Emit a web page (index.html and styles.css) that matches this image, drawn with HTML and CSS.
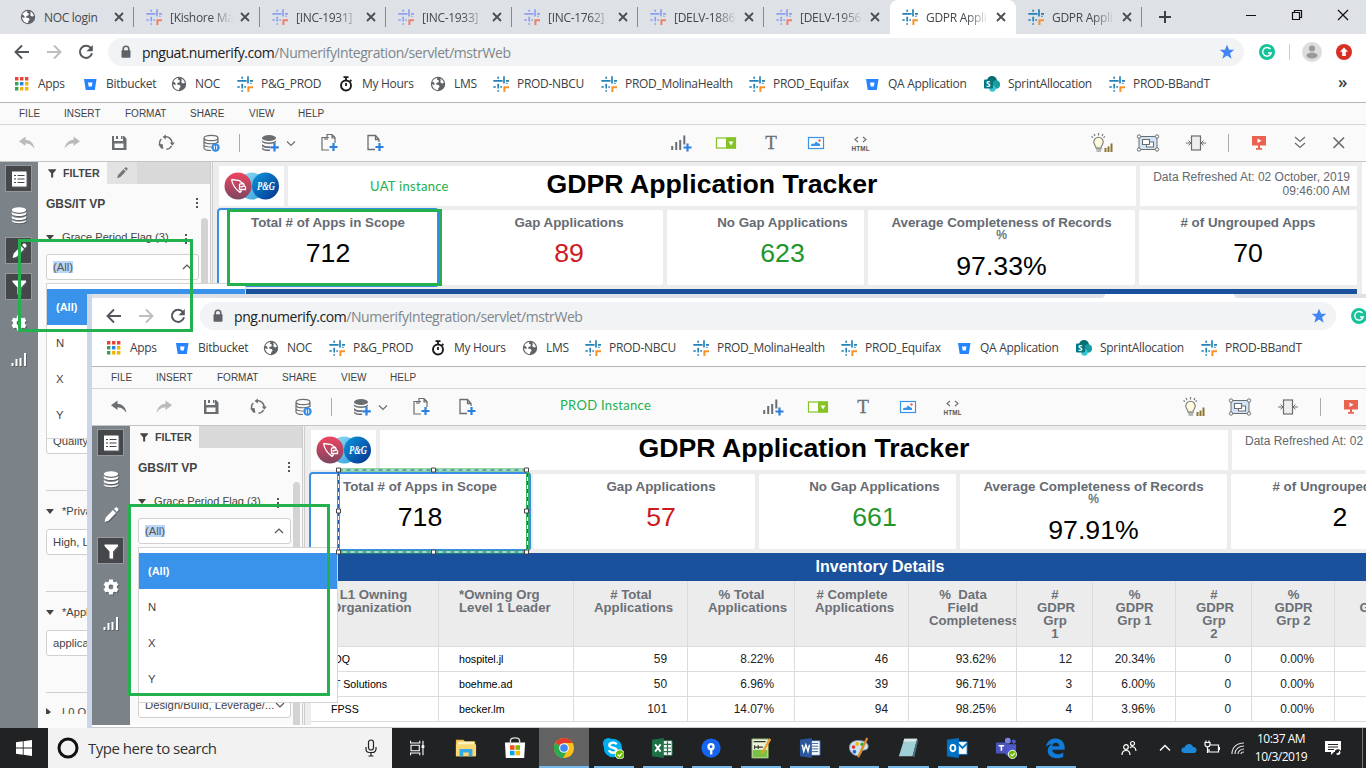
FILE: index.html
```html
<!DOCTYPE html>
<html lang="en">
<head>
<meta charset="utf-8">
<title>GDPR Application Tracker</title>
<link rel="stylesheet" href="styles.css">
</head>
<body>
<svg class="sprite" aria-hidden="true">
  <defs>
    <linearGradient id="g-red" x1="0" y1="0" x2="0" y2="1"><stop offset="0" stop-color="#ee4560"/><stop offset="1" stop-color="#7d4561"/></linearGradient>
    <linearGradient id="g-cyan" x1="0" y1="0" x2="1" y2="1"><stop offset="0" stop-color="#9adcf5"/><stop offset="1" stop-color="#2a9fdc"/></linearGradient>
    <linearGradient id="g-blue" x1="0" y1="0" x2="1" y2="1"><stop offset="0" stop-color="#0b9ae0"/><stop offset="1" stop-color="#052f8c"/></linearGradient>
  </defs>
  <symbol id="hash" viewBox="0 0 16 16"><path d="M.3 4.8H9.6M13 4.8H16M5.2.8V2.8M11 .2V7.6M.3 11H2.8M5.2 7.8V12.6M5.2 14.2V15.8M7.3 11H9M14 7.8V6.8" fill="none" stroke="var(--hash,#2482b8)" stroke-width="1.7"/><path d="M11.4 16V11.2H16" fill="none" stroke="var(--hook,#f7922d)" stroke-width="2"/></symbol>
  <symbol id="globe" viewBox="0 0 16 16"><circle cx="8" cy="8" r="7.2" fill="#5f6368"/><path d="M2.3 5.8C3 3.6 5 2.2 7.6 2l-.8 1.6 2 .9-.2 1.8-2.2.6-.4 1.6 2.7.6 1 1.7-1.3 1.3-.4 2c-3.4-.3-5.900-3-5.900-6.200l1.700 1 1.200-.6-1.600-2.300zM10.300 2.600c1.800.7 3.200 2.300 3.500 4.300l-1.800.5-1.900-1.300.7-1.500z" fill="#fff"/></symbol>
  <symbol id="bucket" viewBox="0 0 16 16"><path d="M2 3h12.500l-1.700 11H3.700z" fill="#2684ff"/><path d="M6 6.500h4.500l-.7 4H6.700z" fill="#fff"/></symbol>
  <symbol id="apps" viewBox="0 0 16 16"><path d="M1 1h3.400v3.400H1zM6 1h3.400v3.400H6zM11 1h3.400v3.400H11z" fill="#ea4335"/><path d="M1 6h3.400v3.400H1zM1 11h3.400v3.400H1z" fill="#34a05a"/><path d="M6 6h3.400v3.400H6z" fill="#2583e8"/><path d="M11 6h3.400v3.400H11zM6 11h3.400v3.400H6zM11 11h3.400v3.400H11z" fill="#f4b400"/></symbol>
  <symbol id="watch" viewBox="0 0 16 16"><circle cx="8" cy="9.500" r="5" fill="none" stroke="#1b1b1b" stroke-width="1.900"/><path d="M5.500 1.200h5M8 1v3M8 7v3M12 4l1.400 1.400" stroke="#1b1b1b" stroke-width="1.800"/></symbol>
  <symbol id="sp" viewBox="0 0 16 16"><circle cx="8" cy="5" r="5" fill="#036c70"/><circle cx="12" cy="8.500" r="4.200" fill="#1a9ba1"/><circle cx="8.500" cy="12.500" r="3.200" fill="#37c6d0"/><rect y="3.500" width="9" height="9" rx="1" fill="#03787c"/><text x="2" y="11" font-size="8" font-weight="700" font-family="Open Sans, sans-serif" fill="#fff">S</text></symbol>
  <symbol id="x" viewBox="0 0 16 16"><path d="M4 4l8 8M12 4l-8 8" stroke="#4a4d51" stroke-width="1.800"/></symbol>
  <symbol id="back" viewBox="0 0 16 16"><path d="M15 8H2M8 1.500L1.500 8 8 14.500" fill="none" stroke="currentColor" stroke-width="1.900"/></symbol>
  <symbol id="fwd" viewBox="0 0 16 16"><path d="M1 8H14M8 1.500L14.500 8 8 14.500" fill="none" stroke="currentColor" stroke-width="1.900"/></symbol>
  <symbol id="reload" viewBox="0 0 16 16"><path d="M13 4.200A6.100 6.100 0 1 0 14 9.300" fill="none" stroke="#54585d" stroke-width="2"/><path d="M14.800 1v6.300H8.500z" fill="#54585d"/></symbol>
  <symbol id="lock" viewBox="0 0 12 14"><path d="M3.200 6V4a2.800 2.800 0 0 1 5.600 0v2" fill="none" stroke="#5f6368" stroke-width="1.600"/><rect x="1.500" y="5.200" width="9" height="7.500" rx="1" fill="#5f6368"/></symbol>
  <symbol id="star" viewBox="0 0 16 16"><path d="M8 .8l2.100 5h5.200l-4.200 3.400 1.500 5.500L8 11.500l-4.600 3.200 1.500-5.500L.7 5.800h5.200z" fill="#4285f4"/></symbol>
  <symbol id="gram" viewBox="0 0 16 16"><circle cx="8" cy="8" r="8" fill="#15c39a"/><path d="M11.500 5.200A4.300 4.300 0 1 0 12.200 9H9" fill="none" stroke="#fff" stroke-width="1.400"/></symbol>
  <symbol id="undo" viewBox="0 0 24 24"><path d="M4 10.200l6.500-4.700v3.300c5 .5 8 3.500 9 9-3-4-5-5.300-9-5.600v2.800z" fill="currentColor"/></symbol>
  <symbol id="redo" viewBox="0 0 24 24"><path d="M20 10.200l-6.500-4.700v3.300c-5 .5-8 3.500-9 9 3-4 5-5.300 9-5.600v2.800z" fill="currentColor"/></symbol>
  <symbol id="save" viewBox="0 0 24 24"><path d="M5 5h2v5h9V5h1l2.500 2.500V19H5zM7.500 12.500v4.500h9v-4.500z" fill="#6b6e70" fill-rule="evenodd"/><path d="M9 5h2v3H9zM14 5h1.500v3H14z" fill="#6b6e70"/></symbol>
  <symbol id="sync" viewBox="0 0 24 24"><path d="M18.200 12.500A6.300 6.300 0 0 0 10.500 6M7.200 7.900a6.300 6.300 0 0 0 1.300 9.600M12.500 18.300a6.300 6.300 0 0 0 5-3.300" fill="none" stroke="#6b6e70" stroke-width="1.500"/><path d="M15.800 11.500h5l-2.500 3.200zM11.800 3.500v5L8.600 6zM4 13.500l4.500-.5 1 5z" fill="#6b6e70"/></symbol>
  <symbol id="dbp" viewBox="0 0 24 24"><path d="M5 7c0-3.500 14-3.500 14 0s-14 3.500-14 0v10c0 1.500 3 2.500 7 2.500M19 7v5M5 10.500c1 3 13 3 14 0M5 14c1 1.500 3 2 7 2" fill="none" stroke="#6b6e70" stroke-width="1.200"/><circle cx="16.500" cy="16.500" r="4.200" fill="#2f8be6"/><path d="M15.300 14.500v4M17.700 14.500v4" stroke="#fff" stroke-width="1"/></symbol>
  <symbol id="dbadd" viewBox="0 0 24 24"><ellipse cx="11" cy="7" rx="7" ry="3" fill="#6b6e70"/><path d="M4 9.500c2 2.500 12 2.500 14 0v1.500c-2 2.500-12 2.500-14 0zM4 13c2 2.300 5 2.500 8 2.200v1.800C8 17.300 5 16.700 4 15zM4 16.500c2 2 5 2.300 8 2V20c-4 .2-7-.5-8-2z" fill="#6b6e70"/><path d="M16.500 12v8.500M12.300 16.300h8.500" stroke="#2c7fdd" stroke-width="2.200"/></symbol>
  <symbol id="chev" viewBox="0 0 12 24"><path d="M2 10.500l4 4 4-4" fill="none" stroke="#6b6e70" stroke-width="1.200"/></symbol>
  <symbol id="pages" viewBox="0 0 24 24"><path d="M8 6.500H5v12.500h7M10 9V3.500h5l3 3V12M15 3.500v3.500h3M8 9V6.500h4" fill="none" stroke="#6b6e70" stroke-width="1.200"/><path d="M16.500 12v8M12.500 16h8" stroke="#2c7fdd" stroke-width="2.200"/></symbol>
  <symbol id="page" viewBox="0 0 24 24"><path d="M12 18.500H5V4.500h7.500l3.500 4V11M12.500 4.500v4H16" fill="none" stroke="#6b6e70" stroke-width="1.300"/><path d="M16.500 12v8M12.500 16h8" stroke="#2c7fdd" stroke-width="2.200"/></symbol>
  <symbol id="vis" viewBox="0 0 24 24"><path d="M3.200 15v4M7.200 11v8M11.200 9v10M15.300 4.500v9" stroke="#6b6e70" stroke-width="2"/><path d="M18.500 12.500v8M14.500 16.500h8" stroke="#2c7fdd" stroke-width="2.200"/></symbol>
  <symbol id="sel" viewBox="0 0 24 24"><rect x="2.500" y="7" width="19" height="10" fill="#fff" stroke="#84c225" stroke-width="1.200"/><rect x="12" y="6.500" width="10" height="11" fill="#84c225"/><path d="M14.500 10.500h5l-2.500 4z" fill="#fff"/></symbol>
  <symbol id="pic" viewBox="0 0 24 24"><rect x="4.500" y="6.500" width="15" height="11" fill="#fff" stroke="#3a93eb" stroke-width="1.200"/><path d="M7 15v-1.500l2-1 1 .5 2-2.500 2 1.500 2 1V15z" fill="#3a93eb"/><circle cx="15.500" cy="9.500" r="1.200" fill="#e8604c"/></symbol>
  <symbol id="code" viewBox="0 0 24 24"><path d="M10 6L7 8.500 10 11M15 6l3 2.500L15 11" fill="none" stroke="#6b6e70" stroke-width="1.100"/><text x="3.500" y="20" font-size="6.300" textLength="18" font-weight="700" font-family="Liberation Sans, sans-serif" fill="#55585a">HTML</text></symbol>
  <symbol id="bulb" viewBox="0 0 24 24"><path d="M7 17c0-2.500-2.200-3-2.200-6a4.700 4.700 0 0 1 9.400 0c0 3-2.200 3.500-2.200 6z" fill="#fdfbdc" stroke="#777" stroke-width="1.100"/><path d="M7 18h5.500M7.500 20h4.500M9.500 2v2.500M5 3l1 2M14 3l-1 2M2.500 5.500L4 6.500M16 5.500l-1.500 1" stroke="#777" stroke-width="1.200"/><path d="M16.500 17v4M19.500 15.500V21M22.500 12.500V21" stroke="#8b7732" stroke-width="2"/></symbol>
  <symbol id="group" viewBox="0 0 24 24"><rect x="3" y="5.500" width="18" height="13" fill="#d3e4f8" stroke="#6b6e70"/><path d="M6.500 8.500h7v5h-7z" fill="#fff" stroke="#6b6e70" stroke-width="1.100"/><path d="M13.500 11h4v5h-7v-2.500h3z" fill="#fff" stroke="#6b6e70" stroke-width="1.100"/><g fill="#fff" stroke="#6b6e70"><circle cx="3" cy="5.500" r="1.700"/><circle cx="21" cy="5.500" r="1.700"/><circle cx="3" cy="18.500" r="1.700"/><circle cx="21" cy="18.500" r="1.700"/></g></symbol>
  <symbol id="fit" viewBox="0 0 24 24"><rect x="7.500" y="5" width="9" height="14" fill="#eee" stroke="#6b6e70" stroke-width="1.200"/><path d="M2 12h4.500M4.500 9.500L7 12l-2.500 2.500M22 12h-4.500M19.500 9.500L17 12l2.500 2.500" fill="none" stroke="#6b6e70"/></symbol>
  <symbol id="show" viewBox="0 0 24 24"><path d="M5 5h14v9.500H5zM11 14h2v4h-2zM9 17h6v1.700H9z" fill="#ea6350"/><path d="M10.500 7.500l4 2.300-4 2.300z" fill="#fff"/></symbol>
  <symbol id="down2" viewBox="0 0 24 24"><path d="M7 6l5 4.500L17 6M7 12l5 4.500 5-4.500" fill="none" stroke="#6b6e70" stroke-width="1.300"/></symbol>
  <symbol id="close" viewBox="0 0 24 24"><path d="M6.500 6.500l10.500 10.500M17 6.500L6.500 17" stroke="#6b6e70" stroke-width="1.700"/></symbol>
  <symbol id="list" viewBox="0 0 24 24"><rect x="5" y="4.500" width="14.500" height="15" fill="#fff"/><path d="M7 8.500h2M7 12h2M7 15.500h2M10.500 8.500h7M10.500 12h7M10.500 15.500h7" stroke="#47474b" stroke-width="1.200"/></symbol>
  <symbol id="db" viewBox="0 0 24 24"><ellipse cx="12" cy="7" rx="7.200" ry="2.800" fill="#fff"/><path d="M4.800 9c2 2.500 12.400 2.500 14.400 0v2c-2 2.800-12.400 2.800-14.400 0zM4.800 13c2 2.500 12.400 2.500 14.400 0v2c-2 2.800-12.400 2.800-14.400 0zM4.800 17c2 2.300 12.400 2.300 14.400 0v1c-2 3-12.400 3-14.400 0z" fill="#fff"/></symbol>
  <symbol id="pen" viewBox="0 0 24 24"><path d="M5.500 19l1.200-4.500L14 7l3 3-7.500 7.700zM15 6l1.500-1.500c1-1 4 1.500 2.700 2.900L17.900 9z" fill="currentColor"/></symbol>
  <symbol id="funnel" viewBox="0 0 24 24"><path d="M5.500 5.500h13.500v1.500l-5 5.500v7h-3.500v-7l-5-5.500z" fill="currentColor"/></symbol>
  <symbol id="gear" viewBox="0 0 24 24"><circle cx="12" cy="12" r="4.200" fill="none" stroke="#fff" stroke-width="3.600"/><path d="M12 4.500V7M12 17v2.500M5.500 8.200l2.200 1.300M16.300 14.500l2.200 1.300M5.500 15.800l2.200-1.300M16.300 9.500l2.200-1.300" stroke="#fff" stroke-width="4"/></symbol>
  <symbol id="bars" viewBox="0 0 24 24"><path d="M5.500 16v3M9.500 12v7M13.500 11v8M18 6v13" stroke="#fff" stroke-width="2"/></symbol>
  <symbol id="logo" viewBox="0 0 56 28"><circle cx="28" cy="14" r="13.500" fill="url(#g-cyan)"/><circle cx="14" cy="14" r="13.500" fill="url(#g-red)"/><circle cx="41.500" cy="14" r="13.500" fill="url(#g-blue)"/><path d="M7.500 7.500c1 5.500 3 9 8.500 13M7.500 7.500l8 1.200 3.500 3M16 20.500l1.500-2M15.500 12l4-.5 1 2.500-4 1M15.500 12v5.500h6v-3M15.500 17.500h6" fill="none" stroke="#fff" stroke-width="1.300"/><text x="33" y="18" font-size="11.500" textLength="18" lengthAdjust="spacingAndGlyphs" font-style="italic" font-weight="700" font-family="Liberation Serif, serif" fill="#fff">P&amp;G</text></symbol>
</svg>

<div class="desktop">
  <div class="window uat">
    <div class="tabs">
      <div class="tab"><svg><use href="#globe"/></svg><span>NOC login</span><svg><use href="#x"/></svg></div>
      <div class="tab pale"><svg><use href="#hash"/></svg><span>[Kishore Ma</span><svg><use href="#x"/></svg></div>
      <div class="tab pale"><svg><use href="#hash"/></svg><span>[INC-1931]</span><svg><use href="#x"/></svg></div>
      <div class="tab pale"><svg><use href="#hash"/></svg><span>[INC-1933]</span><svg><use href="#x"/></svg></div>
      <div class="tab pale"><svg><use href="#hash"/></svg><span>[INC-1762]</span><svg><use href="#x"/></svg></div>
      <div class="tab pale"><svg><use href="#hash"/></svg><span>[DELV-1886</span><svg><use href="#x"/></svg></div>
      <div class="tab pale last"><svg><use href="#hash"/></svg><span>[DELV-1956</span><svg><use href="#x"/></svg></div>
      <div class="tab active"><svg><use href="#hash"/></svg><span>GDPR Appli</span><svg><use href="#x"/></svg></div>
      <div class="tab"><svg><use href="#hash"/></svg><span>GDPR Appli</span><svg><use href="#x"/></svg></div>
      <svg class="plus" viewBox="0 0 16 16"><path d="M8 2v12M2 8h12" stroke="#3c4043" stroke-width="2"/></svg>
      <svg class="winbtns" viewBox="0 0 104 20"><path d="M1 10.500h10M93 5l10 10M103 5l-10 10" stroke="#111" stroke-width="1.200"/><path d="M47.500 7.500h7v7h-7zM49.500 7V5.500h7v7H55" fill="none" stroke="#111" stroke-width="1.200"/></svg>
    </div>
    <div class="address">
      <svg><use href="#back"/></svg><svg class="dim"><use href="#fwd"/></svg><svg><use href="#reload"/></svg>
      <div class="omni"><svg class="lock"><use href="#lock"/></svg><span class="url"><b>pnguat.numerify.com</b>/NumerifyIntegration/servlet/mstrWeb</span><svg class="star"><use href="#star"/></svg></div>
      <svg class="gram"><use href="#gram"/></svg><i class="vline"></i>
      <svg class="user" viewBox="0 0 20 20"><circle cx="10" cy="10" r="10" fill="#dcdcdc"/><circle cx="10" cy="6.500" r="3" fill="#999"/><ellipse cx="10" cy="13.500" rx="5.500" ry="3" fill="#999"/></svg>
      <svg class="update" viewBox="0 0 16 16"><circle cx="8" cy="8" r="8" fill="#d93025"/><path d="M8 3.500l4 4.300H9.800V12H6.200V7.800H4z" fill="#fff"/></svg>
    </div>
    <div class="bookmarks">
      <span><svg><use href="#apps"/></svg>Apps</span><span><svg><use href="#bucket"/></svg>Bitbucket</span><span><svg><use href="#globe"/></svg>NOC</span><span><svg><use href="#hash"/></svg>P&amp;G_PROD</span><span><svg><use href="#watch"/></svg>My Hours</span><span><svg><use href="#globe"/></svg>LMS</span><span><svg><use href="#hash"/></svg>PROD-NBCU</span><span><svg><use href="#hash"/></svg>PROD_MolinaHealth</span><span><svg><use href="#hash"/></svg>PROD_Equifax</span><span><svg><use href="#bucket"/></svg>QA Application</span><span><svg><use href="#sp"/></svg>SprintAllocation</span><span><svg><use href="#hash"/></svg>PROD-BBandT</span><span class="more">»</span>
    </div>
    <div class="menu"><span>FILE</span><span>INSERT</span><span>FORMAT</span><span>SHARE</span><span>VIEW</span><span>HELP</span></div>
    <div class="toolbar">
      <svg class="dim"><use href="#undo"/></svg><svg class="dim"><use href="#redo"/></svg><svg><use href="#save"/></svg><svg><use href="#sync"/></svg><svg><use href="#dbp"/></svg><i></i><svg><use href="#dbadd"/></svg><svg class="narrow"><use href="#chev"/></svg><svg><use href="#pages"/></svg><svg><use href="#page"/></svg><svg><use href="#vis"/></svg><svg><use href="#sel"/></svg><span class="tee">T</span><svg><use href="#pic"/></svg><svg><use href="#code"/></svg><svg><use href="#bulb"/></svg><svg><use href="#group"/></svg><svg><use href="#fit"/></svg><i></i><svg><use href="#show"/></svg><svg><use href="#down2"/></svg><svg><use href="#close"/></svg>
    </div>
    <div class="body">
      <div class="rail"><b class="on"><svg><use href="#list"/></svg></b><b><svg><use href="#db"/></svg></b><b class="on"><svg><use href="#pen"/></svg></b><b class="on"><svg><use href="#funnel"/></svg></b><b><svg><use href="#gear"/></svg></b><b><svg><use href="#bars"/></svg></b></div>
      <div class="panel">
        <div class="ptabs"><span><svg><use href="#funnel"/></svg>FILTER</span><em><svg><use href="#pen"/></svg></em></div>
        <div class="ptitle">GBS/IT VP<i class="kebab"></i></div>
        <div class="scroll">
          <div class="flabel"><i class="tri"></i>Grace Period Flag (3)<i class="kebab"></i></div>
          <div class="select"><mark>(All)</mark><svg viewBox="0 0 12 12"><path d="M2 8l4-4 4 4" fill="none" stroke="#555" stroke-width="1.200"/></svg></div>
          <div class="select quality">Quality.</div>
          <hr>
          <div class="flabel"><i class="tri"></i>*Priva</div>
          <div class="select">High, L</div>
          <hr>
          <div class="flabel"><i class="tri"></i>*Appl</div>
          <div class="select">applica</div>
          <hr>
          <div class="flabel cut"><i class="tri side"></i>L0 O</div>
          <i class="thumb"></i>
        </div>
        <div class="dropdown"><span>(All)</span><span>N</span><span>X</span><span>Y</span></div>
      </div>
      <div class="split"></div>
      <div class="main">
        <div class="head"><div class="brand"><svg><use href="#logo"/></svg></div><h1>GDPR Application Tracker</h1><p>Data Refreshed At: 02 October, 2019 09:46:00 AM</p></div>
        <div class="cards">
          <div class="card picked"><h2>Total # of Apps in Scope</h2><strong>712</strong></div>
          <div class="card shift red"><h2>Gap Applications</h2><strong>89</strong></div>
          <div class="card shift green"><h2>No Gap Applications</h2><strong>623</strong></div>
          <div class="card"><h2>Average Completeness of Records<small>%</small></h2><strong>97.33%</strong></div>
          <div class="card"><h2># of Ungrouped Apps</h2><strong>70</strong></div>
        </div>
        <div class="bar"></div>
      </div>
      <div class="gutter"></div>
    </div>
  </div>

  <div class="frame">
    <div class="window prod">
      <div class="tabedge"><i></i><i></i></div>
      <div class="address">
        <svg><use href="#back"/></svg><svg class="dim"><use href="#fwd"/></svg><svg><use href="#reload"/></svg>
        <div class="omni"><svg class="lock"><use href="#lock"/></svg><span class="url"><b>png.numerify.com</b>/NumerifyIntegration/servlet/mstrWeb</span><svg class="star"><use href="#star"/></svg></div>
        <svg class="gram"><use href="#gram"/></svg>
      </div>
      <div class="bookmarks">
        <span><svg><use href="#apps"/></svg>Apps</span><span><svg><use href="#bucket"/></svg>Bitbucket</span><span><svg><use href="#globe"/></svg>NOC</span><span><svg><use href="#hash"/></svg>P&amp;G_PROD</span><span><svg><use href="#watch"/></svg>My Hours</span><span><svg><use href="#globe"/></svg>LMS</span><span><svg><use href="#hash"/></svg>PROD-NBCU</span><span><svg><use href="#hash"/></svg>PROD_MolinaHealth</span><span><svg><use href="#hash"/></svg>PROD_Equifax</span><span><svg><use href="#bucket"/></svg>QA Application</span><span><svg><use href="#sp"/></svg>SprintAllocation</span><span><svg><use href="#hash"/></svg>PROD-BBandT</span>
      </div>
      <div class="menu"><span>FILE</span><span>INSERT</span><span>FORMAT</span><span>SHARE</span><span>VIEW</span><span>HELP</span></div>
      <div class="toolbar">
        <svg><use href="#undo"/></svg><svg class="dim"><use href="#redo"/></svg><svg><use href="#save"/></svg><svg><use href="#sync"/></svg><svg><use href="#dbp"/></svg><i></i><svg><use href="#dbadd"/></svg><svg class="narrow"><use href="#chev"/></svg><svg><use href="#pages"/></svg><svg><use href="#page"/></svg><svg><use href="#vis"/></svg><svg><use href="#sel"/></svg><span class="tee">T</span><svg><use href="#pic"/></svg><svg><use href="#code"/></svg><svg><use href="#bulb"/></svg><svg><use href="#group"/></svg><svg><use href="#fit"/></svg><i></i><svg><use href="#show"/></svg>
      </div>
      <div class="body">
        <div class="rail"><b class="on"><svg><use href="#list"/></svg></b><b><svg><use href="#db"/></svg></b><b><svg><use href="#pen"/></svg></b><b class="on"><svg><use href="#funnel"/></svg></b><b><svg><use href="#gear"/></svg></b><b><svg><use href="#bars"/></svg></b></div>
        <div class="panel">
          <div class="ptabs"><span><svg><use href="#funnel"/></svg>FILTER</span></div>
          <div class="ptitle">GBS/IT VP<i class="kebab"></i></div>
          <div class="scroll">
            <div class="flabel"><i class="tri"></i>Grace Period Flag (3)<i class="kebab"></i></div>
            <div class="select"><mark>(All)</mark><svg viewBox="0 0 12 12"><path d="M2 8l4-4 4 4" fill="none" stroke="#555" stroke-width="1.200"/></svg></div>
            <div class="select quality">Design/Build, Leverage/...<svg viewBox="0 0 12 12"><path d="M2 4l4 4 4-4" fill="none" stroke="#555" stroke-width="1.200"/></svg></div>
            <i class="thumb"></i>
          </div>
          <div class="dropdown"><span>(All)</span><span>N</span><span>X</span><span>Y</span></div>
        </div>
        <div class="split"></div>
        <div class="main">
          <div class="head"><div class="brand"><svg><use href="#logo"/></svg></div><h1>GDPR Application Tracker</h1><p>Data Refreshed At: 02</p></div>
          <div class="cards">
            <div class="card picked"><h2>Total # of Apps in Scope</h2><strong>718</strong></div>
            <div class="card shift red"><h2>Gap Applications</h2><strong>57</strong></div>
            <div class="card shift green"><h2>No Gap Applications</h2><strong>661</strong></div>
            <div class="card"><h2>Average Completeness of Records<small>%</small></h2><strong>97.91%</strong></div>
            <div class="card"><h2># of Ungrouped Apps</h2><strong>2</strong></div>
          </div>
          <div class="bar">Inventory Details</div>
          <div class="table">
            <div class="row th"><span>*&nbsp;L1 Owning Organization</span><span>*Owning Org Level 1 Leader</span><span># Total Applications</span><span>% Total Applications</span><span># Complete Applications</span><span>%&nbsp; Data<br>Field Completeness</span><span>#<br>GDPR Grp<br>1</span><span>%<br>GDPR Grp 1</span><span>#<br>GDPR Grp<br>2</span><span>%<br>GDPR Grp 2</span><span>#<br>GDPR Grp 3</span></div>
            <div class="row"><span>IDQ</span><span>hospitel.jl</span><span>59</span><span>8.22%</span><span>46</span><span>93.62%</span><span>12</span><span>20.34%</span><span>0</span><span>0.00%</span><span></span></div>
            <div class="row"><span>IT Solutions</span><span>boehme.ad</span><span>50</span><span>6.96%</span><span>39</span><span>96.71%</span><span>3</span><span>6.00%</span><span>0</span><span>0.00%</span><span></span></div>
            <div class="row"><span>FPSS</span><span>becker.lm</span><span>101</span><span>14.07%</span><span>94</span><span>98.25%</span><span>4</span><span>3.96%</span><span>0</span><span>0.00%</span><span></span></div>
            <div class="row"></div>
          </div>
        </div>
      </div>
      <div class="foot"></div>
    </div>
  </div>

  <div class="box uat-filter"></div>
  <div class="box uat-total"></div>
  <div class="box prod-filter"></div>
  <svg class="picker" viewBox="0 0 194 88"><rect x="3.500" y="3" width="189" height="82" fill="none" stroke="#22b14c" stroke-width="3"/><rect x="3.500" y="3" width="189" height="82" fill="none" stroke="#fff" stroke-width="1.200"/><rect x="3.500" y="3" width="189" height="82" fill="none" stroke="#1f5fae" stroke-width="1.200" stroke-dasharray="4 4"/><path d="M1.500 1h4v4h-4zM96.500 1h4v4h-4zM189.500 1h4v4h-4zM1.500 42h4v4h-4zM189.500 42h4v4h-4zM1.500 83h4v4h-4zM96.500 83h4v4h-4zM189.500 83h4v4h-4z" fill="#fff" stroke="#444"/></svg>
  <div class="note n1">UAT instance</div>
  <div class="note n2">PROD Instance</div>

  <div class="taskbar">
    <div class="start"><svg viewBox="0 0 16 16"><path d="M0 2.300L6.800 1.300v6.300H0zM7.600 1.200L16 0v7.600H7.600zM0 8.400h6.800v6.300L0 13.700zM7.600 8.400H16V16l-8.400-1.200z" fill="#fff"/></svg></div>
    <div class="search"><svg viewBox="0 0 22 22"><circle cx="11" cy="11" r="9" fill="none" stroke="#111" stroke-width="3"/></svg><span>Type here to search</span><svg class="mic" viewBox="0 0 14 18"><rect x="4.500" y="1" width="5" height="10" rx="2.500" fill="none" stroke="#222" stroke-width="1.200"/><path d="M2 8v2a3.500 3.500 0 0 0 3.500 3.500h3A3.500 3.500 0 0 0 12 10V8M7 13.500V17M4.500 17h5" fill="none" stroke="#222" stroke-width="1.200"/></svg></div>
    <div class="apps">
      <b><svg viewBox="0 0 24 24"><path d="M5 4v2.500h10V4M5 20v-2.500h10V20M5.500 9h9v6h-9zM18.500 4v16" fill="none" stroke="#fff" stroke-width="1.200"/><path d="M17 9h3v3h-3z" fill="#fff"/></svg></b>
      <b><svg viewBox="0 0 24 24"><path d="M1 3h8l2 2h11v16H1z" fill="#f5c04a"/><path d="M3 5h18v5H3z" fill="#fff3bd"/><path d="M1 8h22v13H1z" fill="#fbd873"/><path d="M5 21v-8h14v8h-4v-4H9v4z" fill="#35a9e6"/></svg></b>
      <b><svg viewBox="0 0 24 24"><path d="M1 6h22l-1 17H2z" fill="#fff"/><path d="M7 8V4c0-4 10-4 10 0v4" fill="none" stroke="#ddd" stroke-width="1.500"/><path d="M6.500 9h5v5h-5z" fill="#f25022"/><path d="M12.500 9h5v5h-5z" fill="#7fba00"/><path d="M6.500 15h5v5h-5z" fill="#00a4ef"/><path d="M12.500 15h5v5h-5z" fill="#ffb900"/></svg></b>
      <b class="live hot"><svg viewBox="0 0 24 24"><circle cx="12" cy="12" r="11" fill="#fbc116"/><path d="M12 12L2.500 6.500A11 11 0 0 1 21.500 6.500H12z" fill="#e33b2e"/><path d="M12 12L2.500 6.500A11 11 0 0 0 11 23l4.800-8.800z" fill="#2da94f"/><circle cx="12" cy="12" r="5.300" fill="#fff"/><circle cx="12" cy="12" r="4.200" fill="#4285f4"/></svg></b>
      <b class="live"><svg viewBox="0 0 24 24"><circle cx="7" cy="7" r="6" fill="#00aff0"/><circle cx="16" cy="16" r="6" fill="#00aff0"/><circle cx="12" cy="12" r="10" fill="#00aff0"/><path d="M16 8c-2-3-8-2-8 1 0 3.500 8 2 8 5.500 0 3-6.500 4-8.500 0" fill="none" stroke="#fff" stroke-width="2.600"/><circle cx="19.500" cy="19" r="5" fill="#6bb700" stroke="#fff"/><path d="M17 19l2 2 3-3.500" fill="none" stroke="#fff" stroke-width="1.300"/></svg></b>
      <b class="live"><svg viewBox="0 0 24 24"><path d="M12 4h11v16H12z" fill="#fff" stroke="#217346"/><path d="M14 8h8M14 12h8M14 16h8M18 5v14" stroke="#217346" stroke-width="1.300"/><path d="M1 3l13-2v22L1 21z" fill="#1e7145"/><path d="M4.500 8l6 8M10.500 8l-6 8" stroke="#fff" stroke-width="2"/></svg></b>
      <b class="live"><svg viewBox="0 0 24 24"><circle cx="12" cy="12" r="10.500" fill="#1565f0"/><circle cx="12" cy="10.500" r="4" fill="#fff"/><circle cx="12" cy="10.500" r="1.500" fill="#1565f0"/><path d="M11 14h2.500v5H11z" fill="#fff"/></svg></b>
      <b class="live"><svg viewBox="0 0 24 24"><path d="M2 2h18v21H2z" fill="#e8f3d8" stroke="#6c8b4c"/><path d="M3 14h16v8H3z" fill="#7ac143"/><path d="M4 5h13M5 9v4M9 9v4M5 11h9" stroke="#333" stroke-width="1.200"/><path d="M22 2L13 18" stroke="#f0a030" stroke-width="2.500"/></svg></b>
      <b class="live"><svg viewBox="0 0 24 24"><path d="M12 4h11v16H12z" fill="#fff" stroke="#2b579a"/><path d="M14 7h7M14 10h7M14 13h7M14 16h7" stroke="#2b579a"/><path d="M1 3l13-2v22L1 21z" fill="#2b579a"/><path d="M3.500 8.500l1.700 7 2.300-7 2.300 7 1.700-7" fill="none" stroke="#fff" stroke-width="1.600"/></svg></b>
      <b class="live"><svg viewBox="0 0 24 24"><path d="M2 14C0 7 6 3 13 4c7 0 11 5 8 9-2 2-5 0-6 3s-3 5-7 4c-3-1-5-3-6-6z" fill="#cfe3f0" stroke="#89a"/><circle cx="6" cy="11" r="2" fill="#e33"/><circle cx="10" cy="7.500" r="2" fill="#f5b400"/><circle cx="15.500" cy="8" r="2" fill="#3a3"/><circle cx="7" cy="16" r="2" fill="#36c"/><path d="M21 1L11 22" stroke="#d98a2b" stroke-width="2.500"/></svg></b>
      <b class="live"><svg viewBox="0 0 24 24"><path d="M8 2h14l-5 19H2z" fill="#9fd0d8"/><path d="M8 2h14l-1 3H7z" fill="#dfe9ea"/><path d="M17 21l5-19 1 2-4 18z" fill="#4e6d75"/></svg></b>
      <b class="live"><svg viewBox="0 0 24 24"><path d="M12 5h11v14H12z" fill="#fff" stroke="#0072c6"/><path d="M13 7l5 5 5-5" fill="none" stroke="#0072c6" stroke-width="2"/><path d="M1 3l13-2v22L1 21z" fill="#0072c6"/><ellipse cx="7.500" cy="12" rx="2.700" ry="3.500" fill="none" stroke="#fff" stroke-width="2"/></svg></b>
      <b class="live"><svg viewBox="0 0 24 24"><circle cx="14" cy="4" r="3.200" fill="#7b83eb"/><circle cx="20.500" cy="5" r="2.300" fill="#5059c9"/><path d="M10 8h13v7c0 8-13 8-13 0z" fill="#5059c9"/><rect x="1" y="6" width="12" height="12" rx="1" fill="#4b53bc"/><path d="M4 9.500h6M7 9.500V15" stroke="#fff" stroke-width="1.700"/><circle cx="19" cy="19" r="4.500" fill="#6bb700" stroke="#fff"/><path d="M17 19l1.700 1.700L21.500 17.500" fill="none" stroke="#fff" stroke-width="1.300"/></svg></b>
      <b class="live"><svg viewBox="0 0 24 24"><path d="M2 11C3 4 8 1.500 12.500 1.500 19 1.500 22.500 6 22.500 11v3H9c.3 5 7.500 6 12 3v4.500C14 25 4 23 4 15c0-3.500 2-6 5-7.500-4 .3-6 2-7 3.500zM9 10h7.500c0-5-7-5-7.500 0z" fill="#0f7ad8" fill-rule="evenodd"/></svg></b>
    </div>
    <div class="tray">
      <svg viewBox="0 0 16 16"><circle cx="5" cy="7" r="2.300" fill="none" stroke="#fff" stroke-width="1.200"/><path d="M1 15c0-6 8-6 8 0" fill="none" stroke="#fff" stroke-width="1.200"/><circle cx="11.500" cy="3.500" r="2" fill="none" stroke="#fff" stroke-width="1.200"/><path d="M9 8c2-2.500 6-1 6 3" fill="none" stroke="#fff" stroke-width="1.200"/></svg>
      <svg viewBox="0 0 16 16"><path d="M3 10.500L8 5.500l5 5" fill="none" stroke="#fff" stroke-width="1.400"/></svg>
      <svg viewBox="0 0 16 16"><path d="M3 13C-1 12 0 7 3.500 7.500 5 2.500 11 3 12 7c4-.5 5 5.500 1 6z" fill="#1b88d8"/></svg>
      <svg viewBox="0 0 16 16"><path d="M6 5h8.500v7H5V9M15.500 7v3M1 2.500h5v2c0 3-5 3-5 0zM2 .5v2M5 .5v2M3.500 7v6" fill="none" stroke="#fff" stroke-width="1.200"/></svg>
      <svg viewBox="0 0 16 16"><path d="M2 14C2 7 7 3 14 3M5 14c0-5 4-8 9-8M8 14c0-3 3-5 6-5M11 14c0-1 1-2 3-2" fill="none" stroke="#ddd" stroke-width="1.200"/></svg>
      <div class="clock">10:37 AM<br>10/3/2019</div>
      <svg viewBox="0 0 16 16"><path d="M0 1h16v11H9l-3 3v-3H0z" fill="#fff"/><path d="M3 4.500h10M3 7h10M3 9.500h6" stroke="#222"/><circle cx="13" cy="12.500" r="3.200" fill="#222"/><path d="M14 10.500a2.300 2.300 0 1 1-3 3 2.600 2.600 0 0 0 3-3z" fill="#fff"/></svg>
    </div>
  </div>
</div>
</body>
</html>
```
FILE: styles.css
```css
* { box-sizing: border-box; }
body { margin: 0; font-family: "Liberation Sans", Arial, sans-serif; overflow: hidden; }
h1, h2, p { margin: 0; }
svg { display: block; flex: none; }
.sprite { position: absolute; width: 0; height: 0; }
.desktop { position: relative; width: 1366px; height: 768px; overflow: hidden; background: #fff; }
.window { width: 1366px; display: flex; flex-direction: column; background: #fff; isolation: isolate; }
.uat { height: 728px; }

/* browser tabs */
.tabs { height: 34px; flex: none; background: #dee1e6; display: flex; align-items: center; padding-left: 8px; }
.tab { width: 126px; height: 34px; display: flex; align-items: center; padding-left: 12px; position: relative; font: 12px "Open Sans", sans-serif; letter-spacing: -.3px; color: #45494d; }
.tab svg { width: 16px; height: 16px; }
.tab span { width: 63px; margin: 0 4px 0 8px; white-space: nowrap; -webkit-mask-image: linear-gradient(90deg, #000 65%, transparent); mask-image: linear-gradient(90deg, #000 65%, transparent); }
.tab:first-child span { -webkit-mask-image: none; mask-image: none; }
.tab:not(.active):not(.last)::after { content: ""; position: absolute; right: 0; top: 7px; height: 20px; width: 1px; background: #85888d; }
.pale { --hash: #8fa0f0; --hook: #ee8068; }
.tab.active { background: #fff; border-radius: 8px 8px 0 0; }
.plus { width: 16px; height: 16px; margin-left: 15px; }
.winbtns { width: 104px; height: 20px; margin: -5px 0 0 72px; }

/* address bar */
.address { height: 36px; flex: none; display: flex; align-items: center; padding-left: 14px; color: #54585d; }
.address > svg { width: 16px; height: 16px; margin-right: 16px; }
.address .dim { color: #bcbec0; }
.omni { width: 1136px; height: 28px; margin-left: -2px; border-radius: 14px; background: #f1f3f4; display: flex; align-items: center; padding: 0 9px 0 12px; }
.omni .lock { width: 12px; height: 14px; }
.url { flex: 1; margin-left: 10px; font: 14px "Open Sans", sans-serif; letter-spacing: -.43px; color: #80868b; white-space: nowrap; }
.url b { font-weight: 400; color: #202124; }
.star { width: 16px; height: 16px; }
.address .gram { margin: 0 14px 0 15px; }
.vline { width: 1px; height: 16px; background: #ccc; }
.address .user { width: 20px; height: 20px; margin: 0 14px 0 12px; }
.address .update { margin: 0; }

.bookmarks { height: 33px; flex: none; border-bottom: 1px solid #b4b4b4; padding: 0 0 5px 14px; display: grid; grid-template-columns: 68px 89px 66px 101px 92px 63px 108px 148px 115px 120px 125px 229px 20px; align-items: center; font: 12px "Open Sans", sans-serif; letter-spacing: -.3px; color: #3c4043; }
.bookmarks span { display: flex; align-items: center; gap: 8px; white-space: nowrap; }
.bookmarks svg { width: 16px; height: 16px; }
.bookmarks .more { font-size: 17px; font-weight: 600; line-height: 16px; padding-bottom: 3px; }

/* application menu and toolbar */
.menu { height: 22px; flex: none; background: #fafafa; border-bottom: 1px solid #d6d6d6; display: grid; grid-template-columns: 45px 61px 65px 59px 49px auto; padding-left: 19px; align-items: center; font-size: 10px; color: #3f4347; }
.toolbar { height: 37px; flex: none; background: #fafafa; border-bottom: 1px solid #c6c6c6; padding-left: 15px; display: grid; grid-template-columns: 45px 47px 47px 45px 40px 19px 27px 32px 46px 306px 45px 45px 45px 44px 241px 47px 48px 44px 19px 41px 39px 24px; align-items: center; color: #6b6e70; }
.toolbar svg { width: 24px; height: 24px; }
.toolbar .narrow { width: 12px; }
.toolbar .dim { color: #b9bbbd; }
.toolbar i { width: 1px; height: 18px; background: #aaa; }
.tee { width: 24px; text-align: center; font: 19px "Liberation Serif", serif; -webkit-text-stroke: .3px #6b6e70; }

.body { display: flex; flex: 1; min-height: 0; background: #ededed; }
.rail { width: 38px; flex: none; background: #7b8288; padding: 3px 0 0 5px; display: flex; flex-direction: column; gap: 9px; color: #fff; }
.rail b { width: 27px; height: 27px; display: flex; align-items: center; justify-content: center; border: 1px solid transparent; }
.rail .on { background: #46474b; border-color: #96999c; }
.rail svg { width: 24px; height: 24px; filter: drop-shadow(1px 1px 0 #5a6066); }
.panel { width: 172px; flex: none; background: #fafafa; position: relative; display: flex; flex-direction: column; color: #444; z-index: 2; }
.ptabs { height: 22px; flex: none; display: flex; background: #d9d9d9; }
.ptabs span { width: 69px; background: #fafafa; display: flex; align-items: center; padding-left: 7px; font-size: 10.7px; font-weight: 700; gap: 4px; }
.ptabs span svg { width: 14px; height: 14px; }
.ptabs em { width: 30px; background: #e2e2e2; display: flex; align-items: center; justify-content: center; color: #777; }
.ptabs em svg { width: 18px; height: 18px; }
.ptitle { height: 34px; flex: none; display: flex; align-items: center; justify-content: space-between; padding: 6px 12px 0 8px; font-size: 12px; font-weight: 700; }
.kebab { width: 2px; height: 10px; background: linear-gradient(#555 2px, transparent 2px) 0 0 / 2px 4px; margin-bottom: 2px; }
.scroll { flex: 1; min-height: 0; overflow: hidden; position: relative; padding-left: 8px; }
.thumb { position: absolute; right: 2px; top: 0; width: 7px; bottom: 0; border-radius: 4px 4px 0 0; background: #d3d3d3; }
.flabel { height: 25px; display: flex; align-items: center; font-size: 11.100px; padding-top: 13px; white-space: nowrap; position: relative; }
.flabel .kebab { margin: 4px 0 0 16px; }
.scroll > .flabel:first-child { margin-bottom: 11px; }
.tri { width: 8px; height: 0; border: 4px solid transparent; border-top: 5px solid #444; border-bottom: 0; margin-right: 8px; }
.tri.side { width: 0; border: 4px solid transparent; border-left: 5px solid #444; border-right: 0; margin-right: 11px; }
.select { width: 153px; height: 26px; border: 1px solid #d0d0d0; border-radius: 3px; background: #fff; padding: 0 5px 0 6px; display: flex; align-items: center; justify-content: space-between; font-size: 11.300px; white-space: nowrap; }
.select svg { width: 12px; height: 12px; }
mark { background: #bcd7f5; color: #555; }
.quality { margin-top: 148px; }
.scroll hr { border: 0; border-top: 1px solid #d0d0d0; margin: 36px 16px 0 0; }
hr + .flabel { height: 38px; padding: 2px 0 0; }
hr + .flabel.cut { height: 21px; padding: 0; line-height: 15px; align-items: flex-start; padding-top: 12px; overflow: hidden; }
.cut .tri { margin-top: 3px; }
.dropdown { position: absolute; left: 8px; top: 121px; width: 200px; height: 156px; background: #fff; border: 1px solid #d4d4d4; padding-top: 5px; font-size: 11.300px; color: #444; }
.dropdown span { display: flex; align-items: center; height: 36px; padding-left: 9px; }
.dropdown span:first-child { background: #3a93eb; color: #fff; font-weight: 700; font-size: 11px; }
.split { width: 3px; flex: none; background: #f4f4f4; border-left: 1px solid #ccc; border-right: 1px solid #ccc; }

/* dashboard */
.main { flex: none; width: 1149px; padding: 4px 0 0 6px; display: flex; flex-direction: column; gap: 4px; }
.head { display: grid; grid-template-columns: 65px 848px 217px; gap: 4px; height: 40px; flex: none; }
.head > * { background: #fff; }
.brand { display: flex; align-items: center; justify-content: center; }
.brand svg { width: 56px; height: 28px; }
h1 { font-size: 26.670px; line-height: 37px; text-align: center; color: #000; }
.head p { font-size: 12px; line-height: 14px; padding: 4px 7px 0 13px; text-align: right; color: #63686d; }
.cards { display: grid; grid-template-columns: 218px 222px 197px 267px 218px; gap: 4px; height: 75px; flex: none; }
.card { background: #fff; border-radius: 2px; padding-top: 6px; text-align: center; }
.card h2 { font-size: 13.330px; line-height: 13px; color: #666b72; white-space: nowrap; }
.card small { display: block; font-size: 12px; line-height: 13px; font-weight: 400; -webkit-text-stroke: .3px #666b72; }
.card strong { display: block; margin-top: 9px; font-size: 26.670px; line-height: 30px; font-weight: 400; color: #000; }
.shift { padding-left: 34px; }
.card.red strong { color: #cf1920; }
.card.green strong { color: #21962a; }
.picked { box-shadow: 0 0 0 2px #3a8ee6; }
.bar { height: 28px; flex: none; width: 1138px; background: #19519c; color: #fff; font-size: 16px; font-weight: 700; line-height: 27px; text-align: center; }
.gutter { flex: 1; background: #fff; }

.table { margin-top: -4px; width: 1138px; color: #111; }
.row { display: grid; grid-template-columns: 128px 135px 114px 107px 114px 108px 76px 83px 76px 83px 114px; height: 25px; background: #fff; border-bottom: 1px solid #dcdcdc; font-size: 11.900px; }
.row span { border-right: 1px solid #dcdcdc; padding: 0 20px 0 0; display: flex; align-items: center; justify-content: flex-end; color: #222; }
.row span:nth-child(-n+2) { justify-content: flex-start; padding: 0 0 0 20px; font-size: 10.670px; color: #000; }
.row.th { height: 66px; background: #ececec; font-weight: 700; }
.row.th span { display: block; padding: 7px 19px 0 20px; text-align: center; font-size: 13.200px; line-height: 13px; color: #6b7077; overflow: hidden; }
.row.th span:nth-child(-n+2) { text-align: left; padding-right: 10px; font-size: 13.200px; color: #6b7077; }

/* overlapping second window */
.frame { position: absolute; left: 87px; top: 294px; width: 1279px; height: 434px; overflow: hidden; border-left: 5px solid #cbd6e9; }
.prod { height: 434px; }
.tabedge { height: 4px; flex: none; display: flex; justify-content: space-between; width: 1274px; }
.tabedge i { background: #dee1e6; width: 1013px; border-radius: 0 0 6px 0; }
.tabedge i:last-child { width: 132px; border-radius: 0 0 0 6px; }
.prod .head p { text-align: left; }
.foot { height: 3px; flex: none; background: #fff; border-bottom: 1px solid #ccc; position: relative; z-index: 1; }
.prod .body { overflow: clip; }

/* annotations */
.box { position: absolute; border: 3px solid #22b14c; }
.uat-filter { left: 18px; top: 239px; width: 175px; height: 93px; }
.uat-total { left: 227px; top: 209px; width: 215px; height: 77px; }
.prod-filter { left: 128px; top: 504px; width: 202px; height: 192px; }
.picker { position: absolute; left: 335px; top: 467px; width: 194px; height: 88px; }
.note { position: absolute; font: 13px/16px Lato, sans-serif; letter-spacing: .3px; color: #22b14c; }
.n1 { left: 370px; top: 178px; }
.n2 { left: 560px; top: 397px; }

.taskbar { position: absolute; left: 0; top: 728px; width: 1366px; height: 40px; background: #212223; display: flex; color: #fff; font-family: "Open Sans", sans-serif; }
.start { width: 48px; display: flex; align-items: center; justify-content: center; }
.start svg { width: 16px; height: 16px; }
.search { width: 344px; background: #f2f2f2; display: flex; align-items: center; padding: 0 14px 0 9px; color: #333; font-size: 15px; letter-spacing: -.5px; }
.search > svg { width: 22px; height: 22px; }
.search span { flex: 1; margin-left: 9px; }
.search .mic { width: 14px; height: 18px; }
.apps { display: flex; }
.apps b { width: 49.150px; display: flex; align-items: center; justify-content: center; position: relative; }
.apps svg { width: 22px; height: 22px; }
.live::after { content: ""; position: absolute; left: 5px; right: 4px; bottom: 0; height: 2px; background: #76b9ed; }
.hot { background: #636363; }
.hot::after { left: 0; right: 0; }
.tray { margin-left: auto; display: grid; grid-template-columns: 36px 24px 23px 26px 18px 77px 37px; align-items: center; justify-items: start; border-right: 1px solid #777; margin-right: 3px; }
.tray svg { width: 16px; height: 16px; }
.clock { width: 66px; text-align: center; font-size: 12px; line-height: 18px; letter-spacing: -.5px; }
```
